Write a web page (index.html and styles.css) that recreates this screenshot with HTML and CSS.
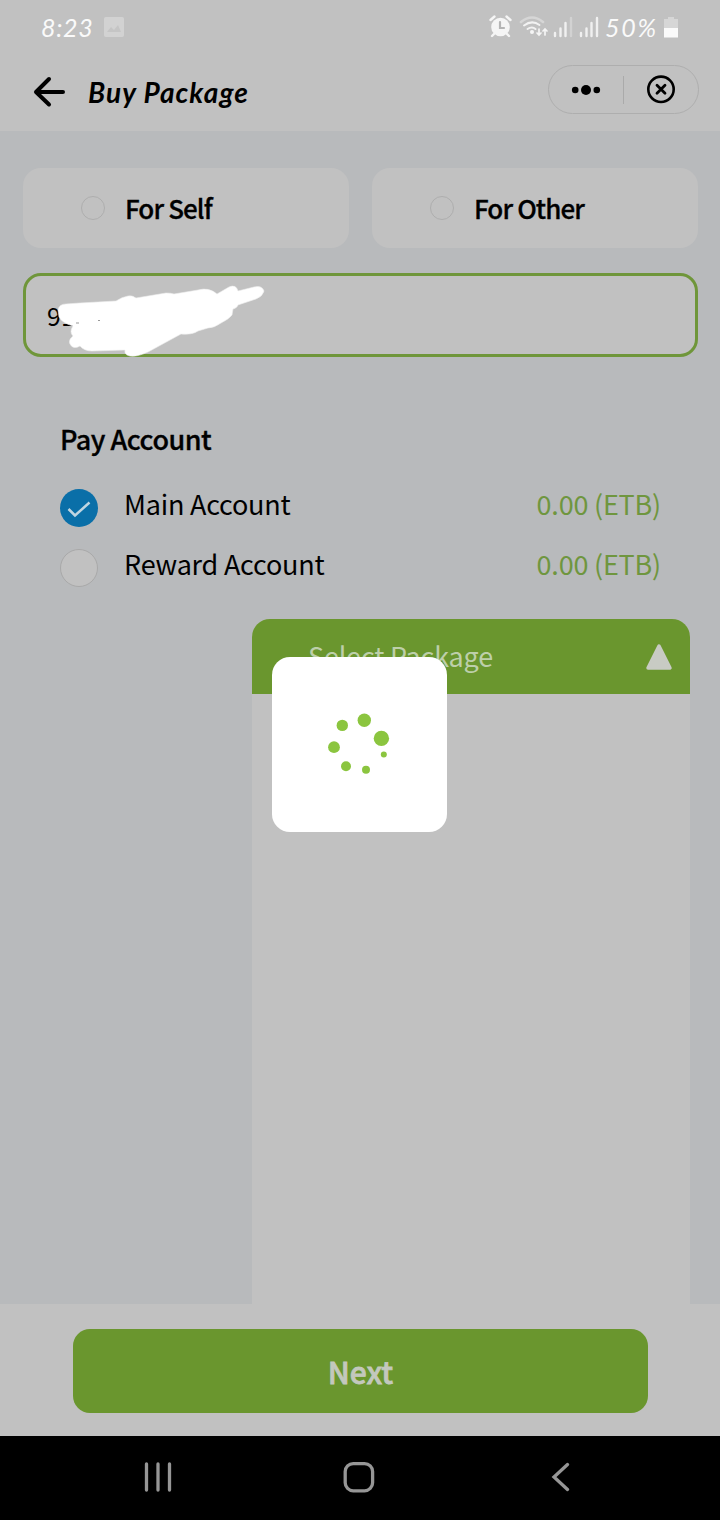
FILE: index.html
```html
<!DOCTYPE html>
<html lang="en">
<head>
<meta charset="utf-8">
<title>Buy Package</title>
<link rel="stylesheet" href="styles.css">
</head>
<body>
<div class="phone">
  <div class="status">
    <span class="clock">8:23</span>
    <svg class="thumb" width="20" height="20" viewBox="0 0 20 20"><rect width="20" height="20" rx="2" fill="#d2d2d2"/><path d="M3 15l4-5 3 3 4-5 3 7z" fill="#c5c5c5"/></svg>
    <svg class="indicators" width="118" height="26" viewBox="487 14 118 26" fill="none" stroke-linecap="round">
      <circle cx="500.500" cy="27" r="9.300" fill="#f5f5f5"/>
      <path d="M490.500 20l4-3.500M510.500 20l-4-3.500M494 34l-2 2M507 34l2 2" stroke="#f5f5f5" stroke-width="2.400"/>
      <path d="M500 22v6h4" stroke="#b5b5b5" stroke-width="2.200"/>
      <path d="M521 22q11-9 22 0" stroke="#d6d6d6" stroke-width="2.600"/>
      <path d="M524 25.500q8-6 15.500-.5M527.500 29q4.500-3 8 0" stroke="#f2f2f2" stroke-width="2"/>
      <circle cx="532" cy="32" r="2" fill="#f5f5f5"/>
      <path d="M539 29v6m-2-2l2 2 2-2M545 35v-6m-2 2l2-2 2 2" stroke="#f5f5f5" stroke-width="1.700"/>
      <path d="M555 33v3M560.500 28.500v7.500M565.500 23v13M581 33v3M586.500 28.500v7.500M591.500 23v13M597 18v18" stroke="#f0f0f0" stroke-width="2.400"/>
      <path d="M571 18v18" stroke="#d2d2d2" stroke-width="2.400"/>
    </svg>
    <span class="percent">50%</span>
    <svg class="battery" width="15" height="24" viewBox="0 0 15 24"><path d="M5 1h6v2h4v9H1V3h4z" fill="#d6d6d6"/><path d="M1 12h14v9.500H1z" fill="#fafafa"/></svg>
  </div>
  <header class="titlebar">
    <svg class="back" width="34" height="32" viewBox="0 0 34 32" fill="none" stroke="#000" stroke-width="4" stroke-linecap="round" stroke-linejoin="round"><path d="M17 3L4 16l13 12.500M4 16h27"/></svg>
    <h1 class="title">Buy Package</h1>
    <div class="capsule">
      <svg class="more" width="30" height="12" viewBox="0 0 30 12"><circle cx="4.200" cy="6" r="3.300"/><circle cx="15" cy="6" r="5"/><circle cx="25.800" cy="6" r="3.300"/></svg>
      <i class="divider"></i>
      <svg class="close" width="30" height="30" viewBox="0 0 30 30" fill="none" stroke="#000"><circle cx="15" cy="14.300" r="12.700" stroke-width="2.600"/><path d="M11 10.300l8 8M19 10.300l-8 8" stroke-width="2.800" stroke-linecap="round"/></svg>
    </div>
  </header>
  <main class="content">
    <div class="choices">
      <div class="choice"><i class="dot"></i><span>For Self</span></div>
      <div class="choice"><i class="dot"></i><span>For Other</span></div>
    </div>
    <div class="number"><span>91</span>
      <svg class="scribble" width="220" height="76" viewBox="50 284 220 76"><path d="M58 310Q59 304 66 304L80 303 116 301Q122 297 128 296Q132 295 136 298L166 293Q171 293 174 294L198 290Q209 287 217 294L229 287Q236 284 238 291L254 287Q262 285 264 291Q263 296 256 299L238 305Q237 308 233 309L232 315Q229 319 221 323Q214 328 208 328L198 331Q192 335 181 334L148 352Q137 357 130 356Q124 355 125 350L92 351Q84 351 80 346Q73 350 70 344Q68 340 73 336Q69 332 73 326Q62 323 59 317Z" fill="#fff" stroke="#eee" stroke-width=".6"/><path d="M76 323h3M98 320.500h2" stroke="#999"/></svg>
    </div>
    <section class="accounts">
      <h2 class="heading">Pay Account</h2>
      <div class="account"><i class="radio checked"><svg width="38" height="38" viewBox="0 0 38 38"><path d="M8.500 20L15 26.500 29.500 13.500" fill="none" stroke="#bfd5e1" stroke-width="2.500"/></svg></i><span class="name">Main Account</span><span class="amount">0.00 (ETB)</span></div>
      <div class="account"><i class="radio"></i><span class="name">Reward Account</span><span class="amount">0.00 (ETB)</span></div>
    </section>
    <section class="packages">
      <div class="package-head"><span>Select Package</span><svg width="28" height="28" viewBox="0 0 28 28"><path d="M14 3L25 25H3z" fill="#c8cbc4" stroke="#c8cbc4" stroke-width="3.500" stroke-linejoin="round"/></svg></div>
    </section>
  </main>
  <footer class="footer"><button class="next">Next</button></footer>
  <nav class="nav">
    <svg width="720" height="84" viewBox="0 1436 720 84" fill="none" stroke="#969696" stroke-width="3.300" stroke-linecap="round"><path d="M146.500 1464v26M158 1464v26M169.500 1464v26M567.500 1464.500L554 1477l13.500 12.500"/><rect x="345.200" y="1463.600" width="27.400" height="27.200" rx="8"/></svg>
  </nav>
  <div class="loader">
    <svg width="175" height="175" viewBox="272 657 175 175" fill="#8bc53f"><circle cx="364.300" cy="720.300" r="6.700"/><circle cx="381.400" cy="738.400" r="7.700"/><circle cx="342.300" cy="725.400" r="5.700"/><circle cx="334" cy="747.200" r="5.900"/><circle cx="346" cy="766.300" r="5"/><circle cx="366" cy="769.700" r="4"/><circle cx="383.800" cy="754.600" r="3"/></svg>
  </div>
</div>
</body>
</html>
```
FILE: styles.css
```css
* { box-sizing: border-box; }
body { margin: 0; font-family: "Noto Sans CJK SC", "Noto Sans", sans-serif; color: #000; }
h1, h2 { margin: 0; }
svg { display: block; flex: none; }
.phone { position: relative; width: 720px; height: 1520px; display: flex; flex-direction: column; background: #b8babc; overflow: hidden; }
.status { height: 54px; background: #c1c1c1; display: flex; align-items: center; padding: 0 42px 0 41px; color: #fafafa; font-family: Lato, sans-serif; font-style: italic; font-size: 25px; line-height: 54px; }
.clock { width: 63px; letter-spacing: 0.7px; }
.indicators { margin-left: auto; }
.percent { width: 58px; letter-spacing: 1.8px; }
.battery { margin-top: 1px; }
.titlebar { height: 77px; background: #c1c1c1; display: flex; align-items: center; padding: 0 21px 2px 32px; }
.title { margin-left: 22px; font: italic 700 28px/40px Lato, sans-serif; letter-spacing: 1.05px; }
.capsule { width: 151px; height: 49px; border: 1px solid #aeaeae; border-radius: 25px; margin: -4px 0 0 auto; display: flex; align-items: center; padding-left: 22px; }
.divider { width: 1px; height: 28px; background: #aaa; margin: 0 22px; }
.content { height: 1173px; padding: 37px 22px 0 23px; display: flex; flex-direction: column; }
.choices { display: flex; gap: 23px; height: 80px; }
.choice { width: 326px; border-radius: 18px; background: #c1c1c1; display: flex; align-items: center; padding-left: 58px; font-size: 26px; font-weight: 500; letter-spacing: -0.9px; }
.choice span { padding-bottom: 2px; -webkit-text-stroke: 0.3px #000; }
.dot { width: 24px; height: 24px; border: 1px solid #aeaeae; border-radius: 50%; margin-right: 20px; }
.number { position: relative; margin-top: 25px; height: 84px; border: 3px solid #6f963a; border-radius: 18px; background: #c1c1c1; padding-left: 21px; font-size: 25px; line-height: 78px; }
.scribble { position: absolute; left: 24px; top: 8px; }
.accounts { padding: 62px 37px 0 37px; height: 262px; }
.heading { font-size: 27px; font-weight: 500; line-height: 40px; height: 58px; letter-spacing: -0.5px; -webkit-text-stroke: 0.3px #000; }
.account { height: 60px; display: flex; align-items: center; font-size: 27px; letter-spacing: -0.22px; }
.radio { width: 38px; height: 38px; border-radius: 50%; border: 1px solid #a9a9a9; background: #c1c1c1; margin: 1px 26px 0 0; }
.radio.checked { border: 0; background: #0a6fa8; }
.name, .amount { padding-bottom: 8px; }
.amount { margin-left: auto; color: #6f963f; letter-spacing: -0.22px; }
.packages { width: 438px; height: 685px; margin-left: 229px; background: #c1c1c1; border-radius: 18px 18px 0 0; }
.package-head { height: 75px; border-radius: 18px 18px 0 0; background: #6a962e; display: flex; align-items: center; justify-content: space-between; padding: 0 17px 0 56px; font-size: 27px; letter-spacing: -0.2px; color: #bdcfaa; }
.package-head span { padding-bottom: 3px; }
.footer { height: 132px; background: #c1c1c1; padding: 25px 72px 0 73px; }
.next { display: block; width: 575px; height: 84px; border: 0; border-radius: 17px; background: #6a962e; color: #c3c8bd; font: 500 30px "Noto Sans CJK SC", sans-serif; -webkit-text-stroke: 0.8px #c3c8bd; }
.nav { height: 84px; background: #000; }
.loader { position: absolute; left: 272px; top: 657px; width: 175px; height: 175px; background: #fff; border-radius: 18px; }
```
